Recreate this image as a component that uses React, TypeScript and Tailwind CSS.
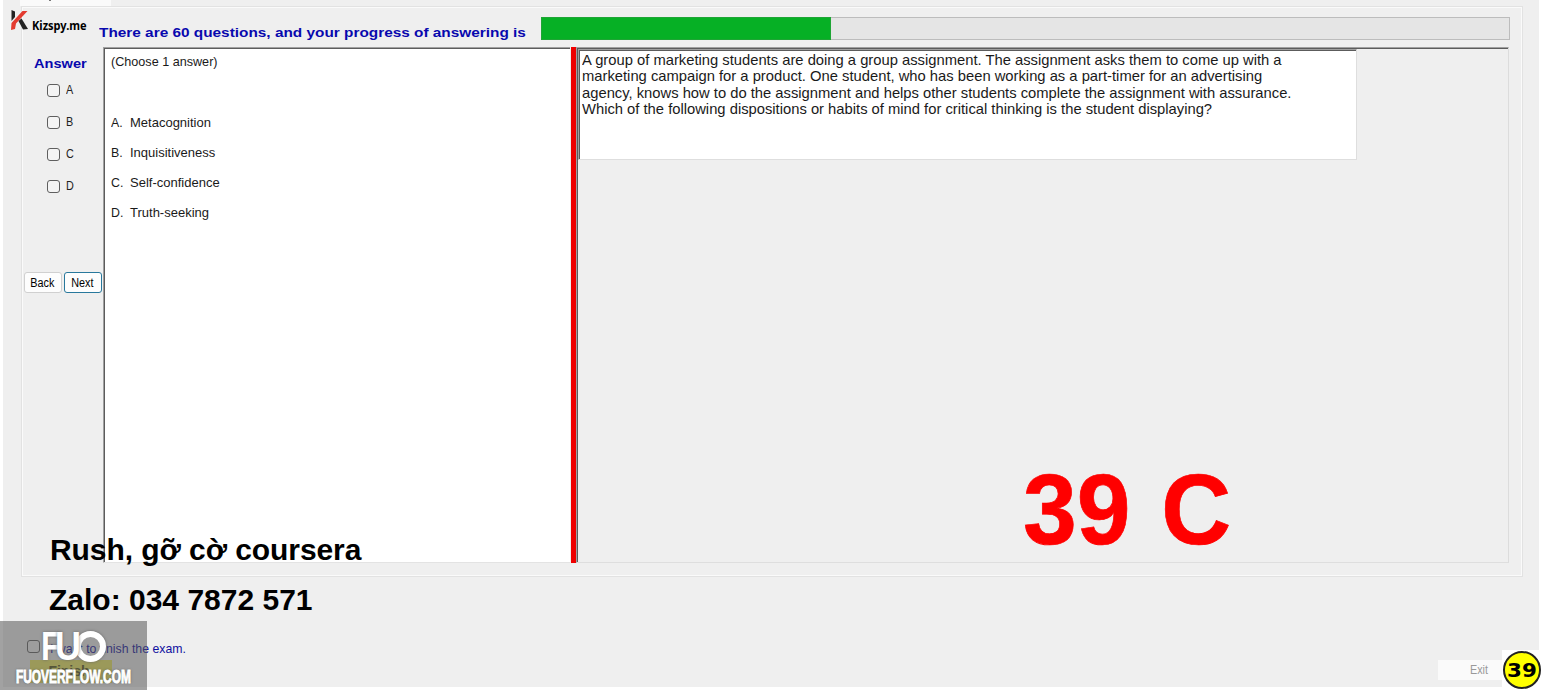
import type { ReactNode } from "react";

const choices = ["A", "B", "C", "D"];

const options = [
  { key: "A.", text: "Metacognition" },
  { key: "B.", text: "Inquisitiveness" },
  { key: "C.", text: "Self-confidence" },
  { key: "D.", text: "Truth-seeking" },
];

const question = [
  "A group of marketing students are doing a group assignment. The assignment asks them to come up with a",
  "marketing campaign for a product. One student, who has been working as a part-timer for an advertising",
  "agency, knows how to do the assignment and helps other students complete the assignment with assurance.",
  "Which of the following dispositions or habits of mind for critical thinking is the student displaying?",
];

function Box() {
  return <span className="block size-[13px] shrink-0 rounded-[3px] border border-[#5f5f5f] bg-[#f4f4f4]" />;
}

function SmallButton({ children, className }: { children: ReactNode; className: string }) {
  return (
    <button className={`flex h-[21px] items-center justify-center rounded-[3px] border bg-[#fdfdfd] pr-[2px] text-[12px] leading-none text-black ${className}`}>
      <span className="inline-block scale-x-[0.9]">{children}</span>
    </button>
  );
}

function Header() {
  return (
    <div className="flex h-[40px] pl-[77px]">
      <h1 className="mt-[17px] w-[442px] shrink-0 whitespace-nowrap text-[13.5px] font-bold leading-[18px] text-[#0808ae]">
        <span className="inline-block origin-left scale-x-[1.138]">There are 60 questions, and your progress of answering is</span>
      </h1>
      <div className="mt-[10px] h-[23px] w-[969px] border border-[#bcbcbc] bg-[#e5e5e5]">
        <div className="-mt-px -ml-px h-[23px] w-[290px] border border-[#1fa535] bg-[#06b025]" />
      </div>
    </div>
  );
}

function AnswerColumn() {
  return (
    <aside className="w-[81px] shrink-0">
      <h2 className="mt-[8px] pl-[12px] text-[13.5px] font-bold leading-[18px] text-[#0808ae]">
        <span className="inline-block origin-left scale-x-[1.08]">Answer</span>
      </h2>
      <div className="mt-[11px] flex flex-col gap-[19px] pl-[25px]">
        {choices.map((c) => (
          <label key={c} className="flex h-[13px] items-center gap-[6px] text-[12px] leading-[13px] text-[#222]">
            <Box />
            <span className="inline-block origin-left scale-x-[0.9]">{c}</span>
          </label>
        ))}
      </div>
      <div className="mt-[79px] flex gap-[2px] pl-[2px]">
        <SmallButton className="w-[38px] border-[#d0d0d0]">Back</SmallButton>
        <SmallButton className="w-[38px] border-[#28789c]">Next</SmallButton>
      </div>
    </aside>
  );
}

function OptionsPanel() {
  return (
    <section className="w-[467px] shrink-0 border-t border-b border-l border-t-[#a0a0a0] border-b-[#e3e3e3] border-l-[#a0a0a0] bg-white pl-[7px] text-[13px] text-[#1a1a1a] shadow-[inset_1px_1px_0_#5c5c5c]">
      <p className="mt-[5px] leading-[18px]">
        <span className="inline-block origin-left scale-x-[0.97]">(Choose 1 answer)</span>
      </p>
      <ul className="mt-[43px] flex flex-col gap-[12px]">
        {options.map((o) => (
          <li key={o.key} className="flex leading-[18px]">
            <span className="w-[19px]">
              <span className="inline-block origin-left scale-x-[0.95]">{o.key}</span>
            </span>
            <span>{o.text}</span>
          </li>
        ))}
      </ul>
    </section>
  );
}

function QuestionPanel() {
  return (
    <section className="w-[933px] shrink-0 border border-t-[#a0a0a0] border-r-[#dcdcdc] border-b-[#dedede] border-l-[#a0a0a0] pt-px pl-px shadow-[inset_1px_1px_0_#5c5c5c]">
      <div className="h-[111px] w-[779px] border border-t-[#a0a0a0] border-r-[#dedede] border-b-[#dedede] border-l-[#a0a0a0] bg-white pt-[2px] pl-[3px] text-[15px] leading-[16.3px] text-[#1a1a1a] shadow-[inset_1px_1px_0_#5c5c5c]">
        {question.map((line) => (
          <p key={line} className="origin-left scale-x-[0.984] whitespace-nowrap">{line}</p>
        ))}
      </div>
    </section>
  );
}

function Brand() {
  return (
    <div className="absolute top-[9px] left-[10px] flex">
      <svg width="20" height="22" viewBox="0 0 20 22">
        <path d="M1.5 1 L5 2.5 L5 8 L1.5 12Z" fill="#222" />
        <path d="M12.5 2 L17.5 2 L6 14.5 L5 20 L1 21 L1.5 14Z" fill="#e33b30" />
        <path d="M8.5 12 L11.5 9.5 L18 20 L13 20.5Z" fill="#222" />
      </svg>
      <span className="mt-[9px] ml-[2px] inline-block origin-left scale-x-[0.92] whitespace-nowrap font-['Noto_Sans'] text-[12px] font-bold leading-[16px] text-black">
        Kizspy.me
      </span>
    </div>
  );
}

function Watermark() {
  return (
    <div className="absolute top-[621px] left-0 h-[69px] w-[147px] overflow-hidden bg-[#555]/55 text-white">
      <div className="absolute top-[10px] left-[41px] flex h-[30px] items-center text-[40px] font-bold leading-[30px] [text-shadow:0_0_3px_#666]">
        <span className="inline-block w-[14px] origin-left scale-x-[0.8]">F</span>
        <span className="inline-block w-[20px] origin-left scale-x-[0.9]">U</span>
        <span className="block size-[31px] shrink-0 rounded-full border-[6px] border-white shadow-[0_0_3px_#666]" />
      </div>
      <div className="absolute top-[47px] left-[16px] origin-left scale-x-[0.66] whitespace-nowrap text-[18px] font-bold leading-[19px] [-webkit-text-stroke:1px_white] [text-shadow:0_0_3px_#444]">
        FUOVERFLOW.COM
      </div>
    </div>
  );
}

export default function App() {
  return (
    <main className="relative h-[690px] w-[1542px] overflow-hidden bg-white pl-[3px] font-['Liberation_Sans',Arial,sans-serif]">
      <div className="flex h-[687px] w-[1536px] flex-col bg-[#efefef]">
        <div className="ml-[17px] h-[6px] w-[91px] shrink-0 bg-[#fafafa]">
          <div className="ml-[29px] h-px w-[2px] bg-[#777]" />
        </div>
        <div className="ml-[18px] h-[571px] w-[1502px] shrink-0 border border-[#e2e2e2] outline outline-1 -outline-offset-2 outline-[#fafafa]">
          <Header />
          <div className="flex h-[516px]">
            <AnswerColumn />
            <OptionsPanel />
            <div className="ml-px w-[5px] shrink-0 bg-[#ee0000]" />
            <QuestionPanel />
          </div>
        </div>
        <footer className="flex justify-between">
          <div className="pl-[24px]">
            <label className="mt-[62px] flex h-[18px] text-[13px] leading-[18px] text-[#1010a0]">
              <span className="mt-px">
                <Box />
              </span>
              <span className="mt-[1px] ml-[10px] origin-left scale-x-[0.945] whitespace-nowrap">I want to finish the exam.</span>
            </label>
            <button className="mt-[3px] ml-[3px] flex h-[23px] w-[82px] items-center justify-center bg-[#f0ec60] pr-[4px] text-[14px] font-bold text-[#55551a]">
              Finish
            </button>
          </div>
          <button className="mt-[83px] mr-[22px] flex h-[20px] w-[79px] items-center justify-center bg-[#fafafa] pl-[3px] text-[12px] text-[#999]">
            <span className="inline-block scale-x-[0.9]">Exit</span>
          </button>
        </footer>
      </div>

      <Brand />
      <div className="absolute top-[532px] left-[50px] whitespace-nowrap text-[30px] font-bold leading-[36px] tracking-[-0.07px] text-black">Rush, gỡ cờ coursera</div>
      <div className="absolute top-[582px] left-[49px] whitespace-nowrap text-[30px] font-bold leading-[36px] text-black">Zalo: 034 7872 571</div>
      <div className="absolute top-[452px] left-[1023px] origin-left scale-x-[0.967] whitespace-pre text-[100px] font-bold leading-[115px] text-[#ff0000] [-webkit-text-stroke:0.7px_#ff0000] [word-spacing:4px]">39 C</div>
      <Watermark />
      <div className="absolute top-[650px] left-[1502px] flex h-[40px] w-[40px] items-center justify-center bg-white">
        <div className="flex size-[38px] items-center justify-center rounded-full border-2 border-[#222] bg-[#ffff00] font-['DejaVu_Sans'] text-[20px] font-bold leading-none text-black">
          <span className="inline-block scale-x-[1.07]">39</span>
        </div>
      </div>
    </main>
  );
}
